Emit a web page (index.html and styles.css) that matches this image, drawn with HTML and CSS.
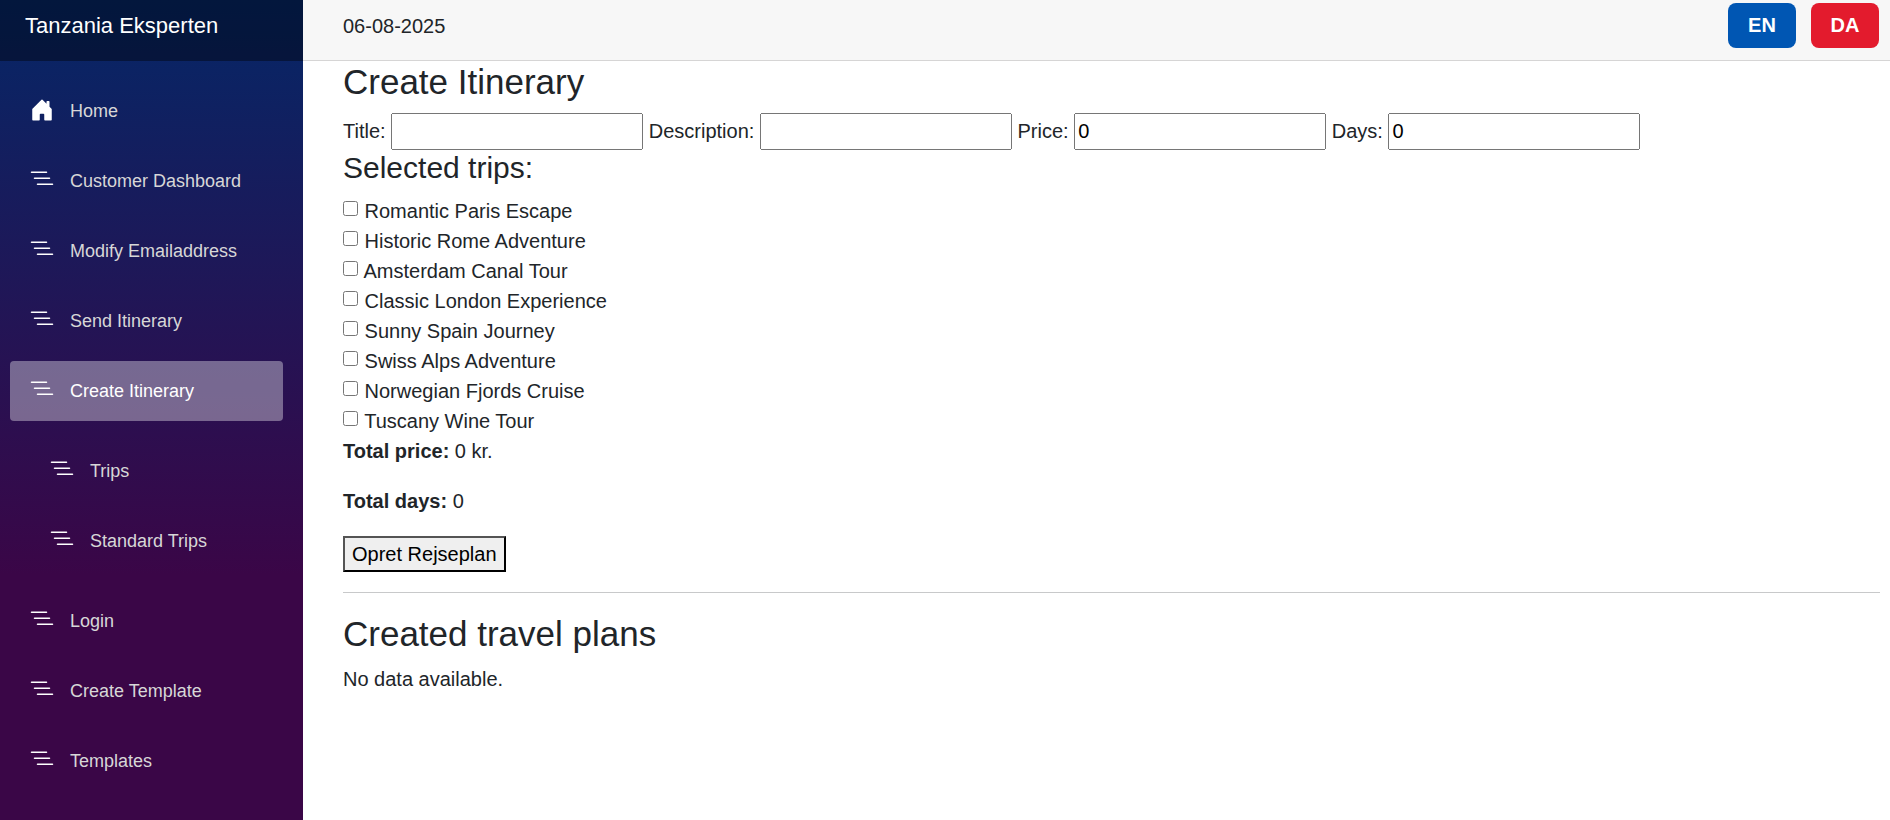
FILE: index.html
```html
<!DOCTYPE html>
<html lang="en">
<head>
<meta charset="utf-8">
<title>Create Itinerary</title>
<link rel="stylesheet" href="styles.css">
</head>
<body>
<svg class="sprites" aria-hidden="true">
  <symbol id="list" viewBox="0 0 16 16"><path fill-rule="evenodd" d="M4.5 11.5A.5.5 0 0 1 5 11h10a.5.5 0 0 1 0 1H5a.5.5 0 0 1-.5-.5zm-2-4A.5.5 0 0 1 3 7h10a.5.5 0 0 1 0 1H3a.5.5 0 0 1-.5-.5zm-2-4A.5.5 0 0 1 1 3h10a.5.5 0 0 1 0 1H1a.5.5 0 0 1-.5-.5z"/></symbol>
  <symbol id="house" viewBox="0 0 16 16"><path d="M6.5 14.5v-3.505c0-.245.25-.495.5-.495h2c.25 0 .5.25.5.5v3.5a.5.5 0 0 0 .5.5h4a.5.5 0 0 0 .5-.5v-7a.5.5 0 0 0-.146-.354L13 5.793V2.5a.5.5 0 0 0-.5-.5h-1a.5.5 0 0 0-.5.5v1.293L8.354 1.146a.5.5 0 0 0-.708 0l-6 6A.5.5 0 0 0 1.5 7.5v7a.5.5 0 0 0 .5.5h4a.5.5 0 0 0 .5-.5Z"/></symbol>
</svg>
<div class="page">
  <aside class="sidebar">
    <div class="brand-row"><a class="brand">Tanzania Eksperten</a></div>
    <nav class="nav">
      <a class="nav-link"><svg class="icon icon-home"><use href="#house"/></svg>Home</a>
      <a class="nav-link"><svg class="icon"><use href="#list"/></svg>Customer Dashboard</a>
      <a class="nav-link"><svg class="icon"><use href="#list"/></svg>Modify Emailaddress</a>
      <a class="nav-link"><svg class="icon"><use href="#list"/></svg>Send Itinerary</a>
      <a class="nav-link active"><svg class="icon"><use href="#list"/></svg>Create Itinerary</a>
      <div class="subnav">
        <a class="nav-link"><svg class="icon"><use href="#list"/></svg>Trips</a>
        <a class="nav-link"><svg class="icon"><use href="#list"/></svg>Standard Trips</a>
      </div>
      <a class="nav-link"><svg class="icon"><use href="#list"/></svg>Login</a>
      <a class="nav-link"><svg class="icon"><use href="#list"/></svg>Create Template</a>
      <a class="nav-link"><svg class="icon"><use href="#list"/></svg>Templates</a>
    </nav>
  </aside>
  <main class="main">
    <header class="top-row">
      <span class="date">06-08-2025</span>
      <div class="langs">
        <button class="lang lang-en" type="button">EN</button>
        <button class="lang lang-da" type="button">DA</button>
      </div>
    </header>
    <article class="content">
      <h3 class="title">Create Itinerary</h3>
      <div class="fields">
        <label>Title:</label> <input type="text">
        <label>Description:</label> <input type="text">
        <label>Price:</label> <input type="number" value="0">
        <label>Days:</label> <input type="number" value="0">
      </div>
      <h4 class="subtitle">Selected trips:</h4>
      <div class="trip"><input type="checkbox"> Romantic Paris Escape</div>
      <div class="trip"><input type="checkbox"> Historic Rome Adventure</div>
      <div class="trip"><input type="checkbox"> Amsterdam Canal Tour</div>
      <div class="trip"><input type="checkbox"> Classic London Experience</div>
      <div class="trip"><input type="checkbox"> Sunny Spain Journey</div>
      <div class="trip"><input type="checkbox"> Swiss Alps Adventure</div>
      <div class="trip"><input type="checkbox"> Norwegian Fjords Cruise</div>
      <div class="trip"><input type="checkbox"> Tuscany Wine Tour</div>
      <p class="total"><strong>Total price:</strong> 0 kr.</p>
      <p class="total"><strong>Total days:</strong> 0</p>
      <button class="submit" type="button">Opret Rejseplan</button>
      <hr class="rule">
      <h3 class="title plans">Created travel plans</h3>
      <p class="empty">No data available.</p>
    </article>
  </main>
</div>
</body>
</html>
```
FILE: styles.css
```css
* { box-sizing: border-box; }
html, body { margin: 0; height: 100%; }
body {
  font-family: "Liberation Sans", Arial, sans-serif;
  font-size: 20px;
  line-height: 1.5;
  color: #212529;
  background: #fff;
  overflow: hidden;
}
.sprites { display: none; }
.page { display: flex; height: 820px; }

.sidebar {
  width: 303px;
  flex: none;
  background-image: linear-gradient(180deg, rgb(5, 39, 103) 0%, #3a0647 70%);
}
.brand-row {
  height: 61px;
  padding-left: 25px;
  background: rgba(0, 0, 0, 0.4);
}
.brand { display: block; color: #fff; font-size: 22px; line-height: 52px; }
.nav { padding: 20px 20px 0 10px; display: flex; flex-direction: column; gap: 10px; }
.subnav { padding-left: 20px; display: flex; flex-direction: column; gap: 10px; margin: 10px 0; }
.nav-link {
  display: flex;
  align-items: center;
  height: 60px;
  padding-left: 20px;
  border-radius: 4px;
  color: #d7d7d7;
  font-size: 18px;
  line-height: 48px;
}
.nav-link.active { background: rgba(255, 255, 255, 0.37); color: #fff; }
.icon { width: 24px; height: 24px; margin: 0 16px 4px 0; fill: #fff; flex: none; }
.icon-home { margin-bottom: 2px; }

.main { flex: 1; min-width: 0; }
.top-row {
  height: 61px;
  display: flex;
  align-items: flex-start;
  justify-content: space-between;
  background: #f7f7f7;
  border-bottom: 1px solid #d6d5d5;
  padding: 3px 11px 0 40px;
}
.date { line-height: 46px; }
.langs { display: flex; gap: 15px; }
.lang {
  width: 68px;
  height: 45px;
  border: 0;
  border-radius: 8px;
  color: #fff;
  font: bold 20px "Liberation Sans", Arial, sans-serif;
}
.lang-en { background: #0056b3; }
.lang-da { background: #e31b2d; }

.content { padding: 0 10px 0 40px; }
.title { margin: 0 0 10px; font-size: 35px; font-weight: 400; line-height: 1.2; }
.fields input[type="text"], .fields input[type="number"] {
  width: 252px;
  height: 37px;
  font: 20px "Liberation Sans", Arial, sans-serif;
}
.subtitle { margin: 0 0 10px; font-size: 30px; font-weight: 400; line-height: 1.2; }
.trip { line-height: 30px; height: 30px; }
.trip input { width: 15px; height: 15px; margin: 0 1px 0 0; vertical-align: 2px; }
.total { margin: 0 0 19px; line-height: 31px; }
.submit {
  display: block;
  height: 36px;
  padding: 1px 7px;
  border: 2px outset #000;
  background: #efefef;
  color: #000;
  font: 20px "Liberation Sans", Arial, sans-serif;
}
.rule { margin: 20px 0; border: 0; border-top: 1px solid #c8c9ca; }
.plans { margin-bottom: 9px; }
.empty { margin: 0; }
```
